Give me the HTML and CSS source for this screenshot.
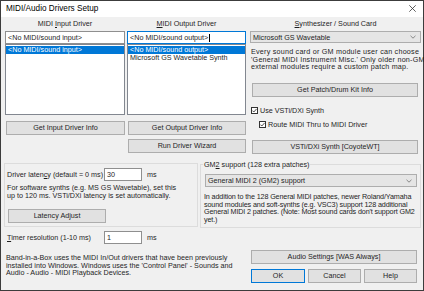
FILE: index.html
```html
<!DOCTYPE html>
<html lang="en">
<head>
<meta charset="utf-8">
<title>MIDI/Audio Drivers Setup</title>
<link rel="stylesheet" href="styles.css">
</head>
<body>
<div class="dialog">
  <div class="titlebar">
    <span class="title">MIDI/Audio Drivers Setup</span>
    <svg class="close" width="7" height="7" viewBox="0 0 7 7"><path d="M0.3 0.3L6.7 6.7M6.7 0.3L0.3 6.7" stroke="#333" stroke-width="0.8" fill="none"/></svg>
  </div>
  <div class="content">
    <div class="top">
      <div class="col col-in">
        <div class="label">MIDI <u>I</u>nput Driver</div>
        <div class="textbox">&lt;No MIDI/sound input&gt;</div>
        <div class="listbox">
          <div class="item sel">&lt;No MIDI/sound input&gt;</div>
        </div>
        <button class="btn btn-info">Get Input Driver Info</button>
      </div>
      <div class="col col-out">
        <div class="label"><u>M</u>IDI Output Driver</div>
        <div class="textbox focus"><span>&lt;No MIDI/sound output&gt;</span><span class="caret"></span></div>
        <div class="listbox">
          <div class="item sel">&lt;No MIDI/sound output&gt;</div>
          <div class="item">Microsoft GS Wavetable Synth</div>
        </div>
        <button class="btn btn-info">Get Output Driver Info</button>
        <button class="btn btn-wizard">Run Driver Wizard</button>
      </div>
      <div class="col col-synth">
        <div class="label"><u>S</u>ynthesizer / Sound Card</div>
        <div class="combo">
          <span>Microsoft GS Wavetable</span>
          <svg class="chev" width="6" height="4" viewBox="0 0 6 4"><path d="M0.5 0.8L3 3.2L5.5 0.8" stroke="#707070" stroke-width="0.8" fill="none"/></svg>
        </div>
        <p class="para para-synth">Every sound card or GM module user can choose<br>'General MIDI Instrument Misc.' Only older non-GM<br>external modules require a custom patch map.</p>
        <button class="btn btn-wide btn-patch">Get Patch/Drum Kit Info</button>
        <div class="check check-1">
          <span class="box"><svg width="5" height="5" viewBox="0 0 5 5"><path d="M0.4 2.6L1.8 4L4.6 0.9" stroke="#222" stroke-width="0.8" fill="none"/></svg></span>
          <span>Use VSTi/DXi Synth</span>
        </div>
        <div class="check check-2">
          <span class="box"><svg width="5" height="5" viewBox="0 0 5 5"><path d="M0.4 2.6L1.8 4L4.6 0.9" stroke="#222" stroke-width="0.8" fill="none"/></svg></span>
          <span>Route MIDI Thru to MIDI Driver</span>
        </div>
        <button class="btn btn-wide btn-vsti">VSTi/DXi Synth [CoyoteWT]</button>
      </div>
    </div>
    <div class="bottom">
      <div class="left">
        <div class="group">
          <div class="field-row">
            <span class="field-label">Driver laten<u>c</u>y (default = 0 ms)</span>
            <div class="textbox num">30</div>
            <span class="unit">ms</span>
          </div>
          <p class="para para-latency">For software synths (e.g. MS GS Wavetable), set this<br>up to 120 ms. VSTi/DXi latency is set automatically.</p>
          <button class="btn btn-latency">Latency Adjust</button>
        </div>
        <div class="field-row timer-row">
          <span class="field-label"><u>T</u>imer resolution (1-10 ms)</span>
          <div class="textbox num">1</div>
          <span class="unit">ms</span>
        </div>
        <p class="para para-note">Band-in-a-Box uses the MIDI In/Out drivers that have been previously<br>installed into Windows. Windows uses the 'Control Panel' - Sounds and<br>Audio - Audio - MIDI Playback Devices.</p>
      </div>
      <div class="right">
        <fieldset class="gm2">
          <legend>GM<u>2</u> support (128 extra patches)</legend>
          <div class="combo">
            <span>General MIDI 2 (GM2) support</span>
            <svg class="chev" width="6" height="4" viewBox="0 0 6 4"><path d="M0.5 0.8L3 3.2L5.5 0.8" stroke="#707070" stroke-width="0.8" fill="none"/></svg>
          </div>
          <p class="para para-gm2">In addition to the 128 General MIDI patches, newer Roland/Yamaha<br>sound modules and soft-synths (e.g. VSC3) support 128 additional<br>General MIDI 2 patches. (Note: Most sound cards don't support GM2<br>yet.)</p>
        </fieldset>
        <div class="actions">
          <button class="btn btn-audio">Audio Settings [WAS Always]</button>
          <div class="ok-row">
            <button class="btn default">OK</button>
            <button class="btn">Cancel</button>
            <button class="btn">Help</button>
          </div>
        </div>
      </div>
    </div>
  </div>
</div>
</body>
</html>
```

FILE: styles.css
```css
* { box-sizing: border-box; }
html, body { margin: 0; padding: 0; }
body { width: 424px; height: 291px; overflow: hidden; background: #f0f0f0; }

.dialog {
  width: 424px;
  height: 291px;
  border: 1px solid #3c3c3c;
  background: #f0f0f0;
  font-family: "Liberation Sans", Arial, sans-serif;
  font-size: 7.2px;
  color: #1e1e1e;
  display: flex;
  flex-direction: column;
}

.titlebar {
  flex: none;
  height: 16px;
  background: #fff;
  display: flex;
  align-items: center;
  justify-content: space-between;
  padding: 0 7px 1px 5px;
}
.title { font-size: 8.2px; color: #000; }
.close { display: block; }

.content { padding: 0 1px 0 3px; }

/* ---------- top area ---------- */
.top { display: flex; align-items: flex-start; }
.col { display: flex; flex-direction: column; }
.col-in { width: 120px; margin-left: 1px; }
.col-out { width: 119px; margin-left: 2px; }
.col-synth { width: 171px; margin-left: 4px; }

.label {
  height: 9px;
  line-height: 9px;
  margin: 2px 0 3px;
  text-align: center;
  white-space: nowrap;
}

.textbox {
  height: 13px;
  border: 1px solid #8f8f8f;
  background: #fff;
  padding: 0 2px;
  line-height: 11px;
  white-space: nowrap;
  display: flex;
  align-items: center;
}
.textbox.focus { border-color: #0078d7; }
.caret { display: block; width: 1px; height: 8px; background: #000; margin-left: 1px; }

.listbox {
  height: 71px;
  border: 1px solid #828790;
  background: #fff;
  padding-top: 1px;
}
.item {
  height: 8px;
  line-height: 8px;
  padding-left: 2px;
  white-space: nowrap;
}
.item.sel { background: #0078d7; color: #fff; }

.btn {
  display: block;
  height: 14px;
  border: 1px solid #adadad;
  background: #e1e1e1;
  font: inherit;
  color: #1e1e1e;
  padding: 0;
  margin: 0;
  line-height: 12px;
  text-align: center;
  white-space: nowrap;
}
.btn-info { width: 119px; margin: 6px 0 0 1px; }
.col-out .btn-info { width: 118px; }
.btn-wizard { width: 118px; margin: 4px 0 0 1px; }

.combo {
  height: 12px;
  border: 1px solid #adadad;
  background: #e5e5e5;
  display: flex;
  align-items: center;
  justify-content: space-between;
  padding: 0 4px 0 2px;
  white-space: nowrap;
}
.chev { display: block; }

.para { margin: 0; line-height: 7.5px; white-space: nowrap; }
.para-synth { height: 23px; margin: 5px 0 0 1px; letter-spacing: 0.22px; }
.btn-wide { width: 166px; margin-left: 2px; }
.btn-patch { margin-top: 12px; }
.btn-vsti { margin-top: 11px; }

.check { height: 9px; display: flex; align-items: center; gap: 2px; white-space: nowrap; }
.check-1 { margin: 9px 0 0 1px; }
.check-2 { margin: 5px 0 0 9px; }
.box {
  width: 7px; height: 7px;
  border: 1px solid #333;
  background: #fff;
  display: flex; align-items: center; justify-content: center;
}
.box svg { display: block; }

/* ---------- bottom area ---------- */
.bottom { display: flex; align-items: flex-start; }
.left { width: 196px; display: flex; flex-direction: column; }
.right { width: 221px; display: flex; flex-direction: column; }

.group {
  width: 194px;
  height: 64px;
  margin-top: 9px;
  border: 1px solid #dcdcdc;
  padding: 4px 0 0 2px;
}
.field-row { display: flex; align-items: center; height: 13px; }
.field-label { width: 97px; white-space: nowrap; }
.textbox.num { width: 38px; }
.unit { margin-left: 5px; }
.para-latency { height: 15px; margin-top: 3px; }
.btn-latency { width: 98px; margin: 10px 0 0 1px; }

.timer-row { margin-top: 4px; padding-left: 3px; }
.para-note { margin: 10px 0 0 2px; }

.gm2 {
  margin: 6px 0 0 0;
  padding: 0 3px 0 4px;
  min-width: 0;
  height: 68px;
  border: 1px solid #dcdcdc;
}
.gm2 legend {
  line-height: 9px;
  padding: 0 1px;
  margin-left: -2px;
  white-space: nowrap;
}
.gm2 .combo { height: 13px; margin-top: 5px; }
.para-gm2 { margin: 6px 0 0 -1px; letter-spacing: -0.13px; }

.actions { margin: 22px 0 0 51px; width: 166px; }
.btn-audio { width: 166px; }
.ok-row {
  margin-top: 5px;
  display: grid;
  grid-template-columns: 54px 53px 53px;
  column-gap: 3px;
}
.ok-row .btn { width: 100%; }
.btn.default { border-color: #0078d7; }
```
